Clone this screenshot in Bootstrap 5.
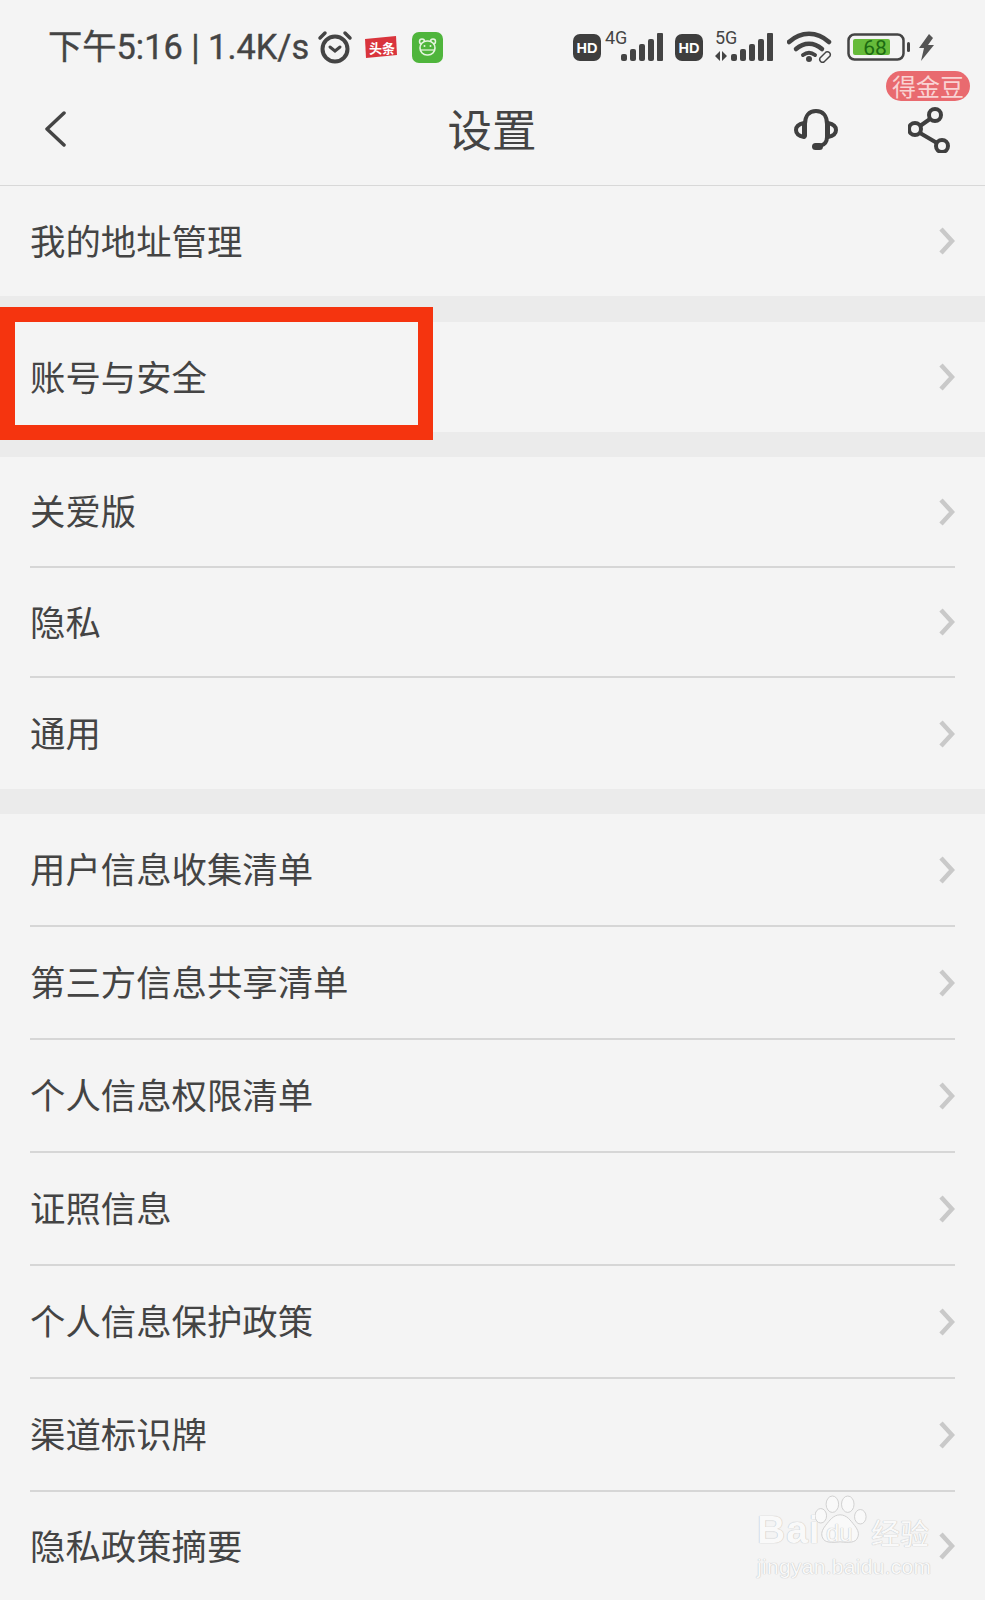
<!DOCTYPE html>
<html lang="zh-CN">
<head>
    <meta charset="UTF-8">
    <meta name="viewport" content="width=device-width, initial-scale=1.0">
    <title>设置</title>
    <link href="https://cdn.jsdelivr.net/npm/bootstrap@5.3.0/dist/css/bootstrap.min.css" rel="stylesheet">
    <script src="https://cdn.jsdelivr.net/npm/bootstrap@5.3.0/dist/js/bootstrap.bundle.min.js"></script>
    <style>
        html, body { height: 1600px; overflow: hidden; }
        body { background: #f4f4f4; color: #444; font-family: Roboto, "Noto Sans CJK SC", sans-serif; position: relative; }
        .status-bar { height: 86px; padding: 27px 51px 0 48px; color: #444; }
        .status-time { font-size: 34.3px; line-height: 40px; white-space: nowrap; -webkit-text-stroke: .4px #444; }
        .net-label { font-size: 18px; line-height: 18px; position: absolute; top: -4px; color: #444; }
        .net-wrap { position: relative; display: block; }
        .sp-10 { margin-left: 10px; }
        .sp-12 { margin-left: 12px; }
        .sp-14 { margin-left: 14px; }
        .sp-15 { margin-left: 15px; }
        .top-bar { height: 100px; padding: 0 35px 15px 35px; border-bottom: 1px solid #d8d8d8; position: relative; }
        .top-side { flex: 1 1 0; margin-top: 4px; }
        .back-icon { margin-left: 9px; margin-top: -3px; }
        .head-icon { margin-right: 70px; }
        .top-title { font-family: "Noto Sans CJK SC", sans-serif; font-size: 44.5px; line-height: 60px; color: #444; margin-left: -1px; }
        .coin-tag { position: absolute; top: -36px; right: -20px; width: 84px; height: 30px; line-height: 30px; border-radius: 15px; background: #e96a6f; color: #f9d3d3; font-family: "Noto Sans CJK SC", sans-serif; font-size: 24px; text-align: center; }
        .set-list { --bs-list-group-bg: transparent; --bs-list-group-border-width: 0; --bs-list-group-color: #444; border-radius: 0; }
        .set-list .list-group-item { padding: 0 30px 0 30px; font-family: "Noto Sans CJK SC", sans-serif; font-size: 35.4px; }
        .set-inner { border-bottom: 2px solid #d6d6d6; }
        .set-inner span { margin-top: -3px; }
        .set-list .list-group-item:last-child .set-inner { border-bottom: 0; }
        .h-110 { height: 110px; }
        .h-111 { height: 111px; }
        .h-113 { height: 113px; }
        .h-108 { height: 108px; }
        .set-gap { background: #ebebeb; }
        .gap-26 { height: 26px; }
        .gap-25 { height: 25px; }
        .red-box { position: absolute; left: 0; top: 307px; width: 433px; height: 133px; border: 15px solid #f5340f; }
        .wm { position: absolute; left: 757px; top: 1495px; width: 176px; color: #f9f9f9; font-family: "Liberation Sans", sans-serif; text-shadow: 0 0 1px #c4c4c4, 0 0 1px #c4c4c4; }
        .wm-brand { height: 57px; }
        .wm-bai { font-size: 39px; line-height: 44px; font-weight: 700; letter-spacing: 1px; white-space: nowrap; width: 58px; }
        .wm-paw { width: 54px; height: 57px; position: relative; flex: none; }
        .wm-du { position: absolute; left: 11px; bottom: 5px; font-size: 24px; line-height: 28px; color: #f9f9f9; }
        .wm-cn { font-family: "Noto Sans CJK SC", sans-serif; font-size: 29px; line-height: 40px; white-space: nowrap; margin-left: 2px; }
        .wm-url { font-size: 21px; line-height: 24px; letter-spacing: .3px; white-space: nowrap; margin-top: 3px; }
    </style>
</head>
<body>
    <div class="status-bar d-flex justify-content-between align-items-start">
        <div class="d-flex align-items-center">
            <span class="status-time">下午5:16 | 1.4K/s</span>
            <svg class="ms-2" width="36" height="36" viewBox="0 0 36 36" fill="none" stroke="#444" stroke-width="4" stroke-linecap="round"><circle cx="18" cy="20" r="12.5"/><path d="M3 9 8 4M33 9 28 4" stroke-width="3.5"/><path d="M13 18l5 4 5-4" stroke-width="3"/></svg>
            <svg class="sp-12" width="32" height="22" viewBox="0 0 32 22"><path d="M0 3 31 0 32 19 1 22z" fill="#d9343c"/><text x="4" y="17" font-size="13" font-weight="700" fill="#fff" font-family="Noto Sans CJK SC">头条</text></svg>
            <svg class="sp-15" width="31" height="31" viewBox="0 0 31 31"><rect width="31" height="31" rx="7" fill="#4fb53c"/><circle cx="10" cy="9.500" r="2.500" fill="none" stroke="#e6f5e0" stroke-width="1.500"/><circle cx="21" cy="9.500" r="2.500" fill="none" stroke="#e6f5e0" stroke-width="1.500"/><rect x="8" y="9" width="15" height="14" rx="7" fill="#4fb53c" stroke="#e6f5e0" stroke-width="1.600"/><path d="M8.500 18h14" stroke="#e6f5e0" stroke-width="1.200"/><circle cx="12.500" cy="14" r="1" fill="#e6f5e0"/><circle cx="18.500" cy="14" r="1" fill="#e6f5e0"/></svg>
        </div>
        <div class="d-flex align-items-center mt-1">
            <svg width="28" height="27" viewBox="0 0 28 27"><rect width="28" height="27" rx="7" fill="#3e3e3e"/><text x="14" y="18.500" text-anchor="middle" font-size="14.500" font-weight="700" fill="#fff" font-family="Liberation Sans">HD</text></svg>
            <span class="net-wrap ms-1">
                <span class="net-label">4G</span>
                <svg class="d-block" width="60" height="28" viewBox="0 0 60 28" fill="#444"><g transform="translate(16 0)"><rect x="0" y="21" width="6" height="7" rx="2"/><rect x="9" y="16" width="6" height="12" rx="2"/><rect x="18" y="11" width="6" height="17" rx="2"/><rect x="27" y="6" width="6" height="22" rx="2"/><rect x="36" y="0" width="6" height="28" rx="1"/></g></svg>
            </span>
            <svg class="sp-10" width="28" height="27" viewBox="0 0 28 27"><rect width="28" height="27" rx="7" fill="#3e3e3e"/><text x="14" y="18.500" text-anchor="middle" font-size="14.500" font-weight="700" fill="#fff" font-family="Liberation Sans">HD</text></svg>
            <span class="net-wrap sp-12">
                <span class="net-label">5G</span>
                <svg class="d-block" width="60" height="28" viewBox="0 0 60 28" fill="#444"><path d="M5 28V18L0 23zM7 18v10l5-5z"/><g transform="translate(16 0)"><rect x="0" y="21" width="6" height="7" rx="2"/><rect x="9" y="16" width="6" height="12" rx="2"/><rect x="18" y="11" width="6" height="17" rx="2"/><rect x="27" y="6" width="6" height="22" rx="2"/><rect x="36" y="0" width="6" height="28" rx="1"/></g></svg>
            </span>
            <svg class="sp-12" width="46" height="32" viewBox="0 0 46 32" fill="none" stroke="#444" stroke-linecap="round"><path d="M2 11c12-11 28-11 40 0" stroke-width="4.500"/><path d="M9 18c8-7 18-7 26 0" stroke-width="4.500"/><path d="M16 24c4-3 8-3 12 0" stroke-width="4"/><circle cx="22" cy="28" r="3" fill="#444" stroke="none"/><path d="M33 27l6-6a3 3 0 0 1 4 4l-6 6a3 3 0 0 1-4-4z" stroke-width="1.500"/></svg>
            <svg class="sp-14" width="64" height="28" viewBox="0 0 64 28"><rect x="1.500" y="1.500" width="55" height="25" rx="6" fill="none" stroke="#444" stroke-width="2.500"/><rect x="6" y="6" width="37" height="16" rx="2" fill="#66bb3a"/><text x="28" y="22" text-anchor="middle" font-size="21" fill="#1c6a12" font-family="Roboto">68</text><rect x="60" y="9" width="3" height="10" rx="1.500" fill="#444"/></svg>
            <svg class="ms-2" width="15" height="27" viewBox="0 0 15 27"><path d="M10 0 0 14h5L2 27 15 11H9l5-7z" fill="#555"/></svg>
        </div>
    </div>

    <div class="top-bar d-flex align-items-center">
        <div class="top-side">
            <svg class="d-block back-icon" width="22" height="36" viewBox="0 0 22 36" fill="none" stroke="#444" stroke-width="3.500" stroke-linecap="round" stroke-linejoin="round"><path d="M20 2 3 18l17 16"/></svg>
        </div>
        <div class="top-title">设置</div>
        <div class="top-side d-flex justify-content-end align-items-center position-relative">
            <svg class="head-icon" width="44" height="42" viewBox="0 0 44 42" fill="none" stroke="#3f3f3f" stroke-width="4" stroke-linecap="round" stroke-linejoin="round"><path d="M11 27V15C11 7 15 2 22 2s11 5 11 13v13c0 5-3 8-7 9"/><path d="M10 14C5 15 2 17 2 21s3 6 8 7zM34 14c5 1 8 3 8 7s-3 6-8 7z"/><rect x="18" y="34" width="11" height="7" rx="3.500" fill="#3f3f3f" stroke="none"/></svg>
            <svg width="42" height="46" viewBox="0 0 42 46" fill="none" stroke="#3f3f3f" stroke-width="4"><circle cx="27" cy="8" r="6"/><circle cx="7" cy="22" r="6"/><circle cx="34" cy="39" r="6"/><path d="M22 12 12 19M12 26l17 10"/></svg>
            <span class="coin-tag">得金豆</span>
        </div>
    </div>

    <div class="list-group list-group-flush set-list">
        <div class="list-group-item"><div class="set-inner d-flex justify-content-between align-items-center h-110 border-0"><span>我的地址管理</span><svg width="16" height="28" viewBox="0 0 16 28" fill="none" stroke="#c9c9c9" stroke-width="4.500"><path d="M2 2l11 12L2 26"/></svg></div></div>
    </div>
    <div class="set-gap gap-26"></div>
    <div class="list-group list-group-flush set-list">
        <div class="list-group-item"><div class="set-inner d-flex justify-content-between align-items-center h-110 border-0"><span>账号与安全</span><svg width="16" height="28" viewBox="0 0 16 28" fill="none" stroke="#c9c9c9" stroke-width="4.500"><path d="M2 2l11 12L2 26"/></svg></div></div>
    </div>
    <div class="set-gap gap-25"></div>
    <div class="list-group list-group-flush set-list">
        <div class="list-group-item"><div class="set-inner d-flex justify-content-between align-items-center h-111"><span>关爱版</span><svg width="16" height="28" viewBox="0 0 16 28" fill="none" stroke="#c9c9c9" stroke-width="4.500"><path d="M2 2l11 12L2 26"/></svg></div></div>
        <div class="list-group-item"><div class="set-inner d-flex justify-content-between align-items-center h-110"><span>隐私</span><svg width="16" height="28" viewBox="0 0 16 28" fill="none" stroke="#c9c9c9" stroke-width="4.500"><path d="M2 2l11 12L2 26"/></svg></div></div>
        <div class="list-group-item"><div class="set-inner d-flex justify-content-between align-items-center h-111"><span>通用</span><svg width="16" height="28" viewBox="0 0 16 28" fill="none" stroke="#c9c9c9" stroke-width="4.500"><path d="M2 2l11 12L2 26"/></svg></div></div>
    </div>
    <div class="set-gap gap-25"></div>
    <div class="list-group list-group-flush set-list">
        <div class="list-group-item"><div class="set-inner d-flex justify-content-between align-items-center h-113"><span>用户信息收集清单</span><svg width="16" height="28" viewBox="0 0 16 28" fill="none" stroke="#c9c9c9" stroke-width="4.500"><path d="M2 2l11 12L2 26"/></svg></div></div>
        <div class="list-group-item"><div class="set-inner d-flex justify-content-between align-items-center h-113"><span>第三方信息共享清单</span><svg width="16" height="28" viewBox="0 0 16 28" fill="none" stroke="#c9c9c9" stroke-width="4.500"><path d="M2 2l11 12L2 26"/></svg></div></div>
        <div class="list-group-item"><div class="set-inner d-flex justify-content-between align-items-center h-113"><span>个人信息权限清单</span><svg width="16" height="28" viewBox="0 0 16 28" fill="none" stroke="#c9c9c9" stroke-width="4.500"><path d="M2 2l11 12L2 26"/></svg></div></div>
        <div class="list-group-item"><div class="set-inner d-flex justify-content-between align-items-center h-113"><span>证照信息</span><svg width="16" height="28" viewBox="0 0 16 28" fill="none" stroke="#c9c9c9" stroke-width="4.500"><path d="M2 2l11 12L2 26"/></svg></div></div>
        <div class="list-group-item"><div class="set-inner d-flex justify-content-between align-items-center h-113"><span>个人信息保护政策</span><svg width="16" height="28" viewBox="0 0 16 28" fill="none" stroke="#c9c9c9" stroke-width="4.500"><path d="M2 2l11 12L2 26"/></svg></div></div>
        <div class="list-group-item"><div class="set-inner d-flex justify-content-between align-items-center h-113"><span>渠道标识牌</span><svg width="16" height="28" viewBox="0 0 16 28" fill="none" stroke="#c9c9c9" stroke-width="4.500"><path d="M2 2l11 12L2 26"/></svg></div></div>
        <div class="list-group-item"><div class="set-inner d-flex justify-content-between align-items-center h-108"><span>隐私政策摘要</span><svg width="16" height="28" viewBox="0 0 16 28" fill="none" stroke="#c9c9c9" stroke-width="4.500"><path d="M2 2l11 12L2 26"/></svg></div></div>
    </div>

    <div class="red-box"></div>

    <div class="wm">
        <div class="wm-brand d-flex align-items-end">
            <div class="wm-bai">Bai</div>
            <div class="wm-paw">
                <svg class="d-block" width="54" height="57" viewBox="0 0 56 58" fill="#f9f9f9" stroke="#cfcfcf" stroke-width="1"><ellipse cx="18" cy="9" rx="6.500" ry="8.500"/><ellipse cx="34" cy="9" rx="6.500" ry="8.500"/><ellipse cx="6" cy="21" rx="6" ry="7.500"/><ellipse cx="47" cy="22" rx="6" ry="7.500"/><path d="M26 20c7 0 11 6 15 11 4 5 5 9 3 13-2 5-9 5-18 4-9 1-16 1-18-4-2-4-1-8 3-13 4-5 8-11 15-11z"/></svg>
                <span class="wm-du">du</span>
            </div>
            <div class="wm-cn">经验</div>
        </div>
        <div class="wm-url">jingyan.baidu.com</div>
    </div>
</body>
</html>
